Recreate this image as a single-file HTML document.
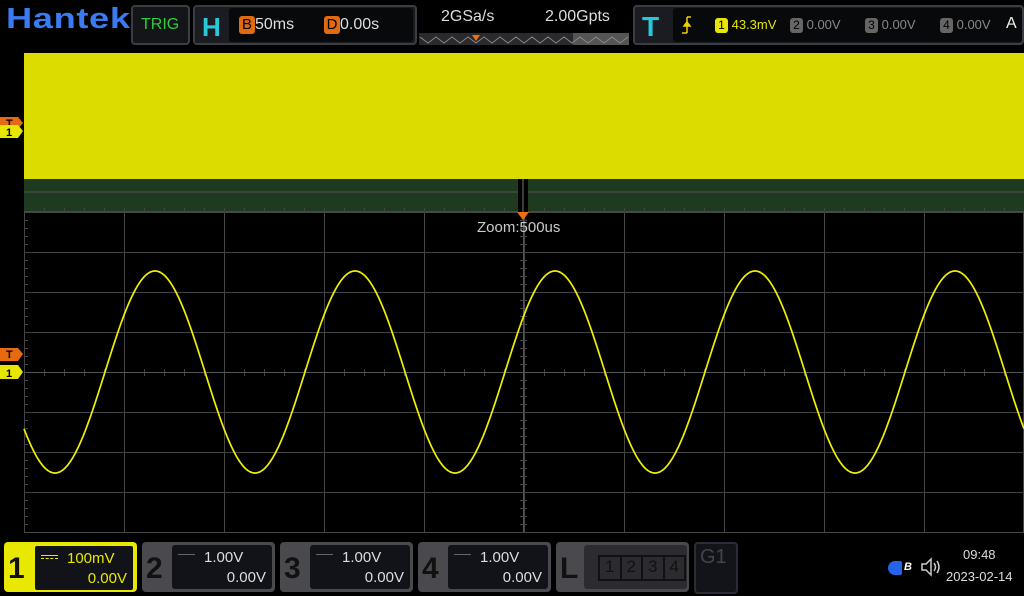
<!DOCTYPE html>
<html><head><meta charset="utf-8"><style>
body{margin:0;width:1024px;height:596px;background:#000;overflow:hidden;font-family:"Liberation Sans",sans-serif;position:relative}
.a{position:absolute}
.box{position:absolute;border:2px solid #3a3d44;border-radius:4px;background:#1a1c22}
.badge{display:inline-block;border-radius:3px;text-align:center;font-size:12px;line-height:15px;width:13px;height:15px}
.ch{position:absolute;top:542px;height:50px;border-radius:4px;background:#4a4a4e}
.ch .n{position:absolute;left:4px;top:10px;font-size:30px;color:#111;font-weight:bold}
.ch .in{position:absolute;left:30px;top:3px;width:100px;height:44px;background:#121318;border-radius:3px;color:#ddd;font-size:15px}
</style></head><body>
<div class="a" style="left:6px;top:3px;font-size:29px;font-weight:bold;color:#3a7bf0;transform:scaleX(1.25);transform-origin:0 0;letter-spacing:0.5px">Hantek</div>
<div class="box" style="left:131px;top:5px;width:55px;height:36px;background:#141519"><div class="a" style="left:8px;top:9px;color:#2ecc40;font-size:16px">TRIG</div></div>
<div class="box" style="left:193px;top:5px;width:220px;height:36px"><div class="a" style="left:7px;top:5px;color:#29c8d8;font-size:26px;font-weight:bold">H</div>
<div class="a" style="left:34px;top:1px;width:184px;height:34px;background:#08090b;border-radius:3px;color:#ddd;font-size:16px">
<span class="a" style="left:10px;top:8px"><span class="badge" style="background:#e06a10;color:#000;width:16px;height:18px;font-size:15px;line-height:18px">B</span>50ms</span>
<span class="a" style="left:95px;top:8px"><span class="badge" style="background:#e06a10;color:#000;width:16px;height:18px;font-size:15px;line-height:18px">D</span>0.00s</span></div></div>
<div class="a" style="left:441px;top:8px;color:#ddd;font-size:16px">2GSa/s</div>
<div class="a" style="left:545px;top:8px;color:#ddd;font-size:16px">2.00Gpts</div>
<div class="a" style="left:419px;top:33px;width:210px;height:12px;background:#2a2a2e"></div>
<div class="a" style="left:573px;top:33px;width:56px;height:12px;background:#555"></div>
<svg class="a" style="left:420px;top:33px" width="210" height="12"><polyline fill="none" stroke="#888" stroke-width="1" points="0,4 8,10 16,4 24,10 32,4 40,10 48,4 56,10 64,4 72,10 80,4 88,10 96,4 104,10 112,4 120,10 128,4 136,10 144,4 152,10 160,4 168,10 176,4 184,10 192,4 200,10 208,4"/><polygon points="52,2 60,2 56,8" fill="#f07010"/></svg>
<div class="box" style="left:633px;top:5px;width:387px;height:36px"><div class="a" style="left:7px;top:4px;color:#29c8d8;font-size:28px;font-weight:bold">T</div>
<div class="a" style="left:38px;top:1px;width:349px;height:34px;background:#08090b;border-radius:3px;font-size:13px;color:#888">
<svg class="a" style="left:8px;top:8px" width="12" height="18"><path d="M6 1V17 M6 1H10 M1 17H6 M3 10L6 6L9 10Z" stroke="#f0d000" fill="#f0d000" stroke-width="1.5"/></svg>
<span class="a" style="left:42px;top:9px;color:#e6e600"><span class="badge" style="background:#e6e600;color:#000">1</span> 43.3mV</span>
<span class="a" style="left:117px;top:9px"><span class="badge" style="background:#666;color:#000">2</span> 0.00V</span>
<span class="a" style="left:192px;top:9px"><span class="badge" style="background:#666;color:#000">3</span> 0.00V</span>
<span class="a" style="left:267px;top:9px"><span class="badge" style="background:#666;color:#000">4</span> 0.00V</span>
<span class="a" style="left:333px;top:7px;color:#eee;font-size:16px">A</span></div></div>
<svg class="a" style="left:0;top:0" width="1024" height="596" id="s">
<rect x="24" y="53" width="1000" height="126" fill="#dcdc00"/>
<rect x="24" y="179" width="1000" height="33" fill="#1e3b22"/>
<line x1="24" y1="192" x2="1024" y2="192" stroke="#555"/>
<line x1="24" y1="212" x2="1024" y2="212" stroke="#666"/>
<g id="g" stroke="#444" stroke-width="1"></g>
<rect x="518" y="179" width="10" height="33" fill="#000"/>
<line x1="523" y1="179" x2="523" y2="212" stroke="#777"/>
<polygon points="517,212 529,212 523,220" fill="#f07010"/>
<path id="w" fill="none" stroke="#f0f000" stroke-width="1.7"/>
<g font-family="Liberation Sans" font-weight="bold" font-size="11">
<path d="M0 117H18L23 123L18 129H0Z" fill="#e86a10"/><text x="6" y="127" fill="#000">T</text>
<path d="M0 125H18L23 131L18 138H0Z" fill="#e6e600"/><text x="6" y="136" fill="#000">1</text>
<path d="M0 348H18L23 354L18 361H0Z" fill="#e86a10"/><text x="6" y="358" fill="#000">T</text>
<path d="M0 365H18L23 372L18 379H0Z" fill="#e6e600"/><text x="6" y="377" fill="#000">1</text>
</g>
</svg>
<div class="a" style="left:477px;top:219px;color:#ccc;font-size:15px">Zoom:500us</div>
<div class="ch" style="left:4px;background:#e8e800;width:133px"><div class="n">1</div><div class="in" style="color:#e8e800;border:1px solid #e8e800;width:98px"><span class="a" style="left:6px;top:9px;width:17px;border-top:1px solid #e8e800;border-bottom:1px dashed #e8e800;height:2px"></span><span class="a" style="left:32px;top:4px">100mV</span><span class="a" style="right:6px;top:24px">0.00V</span></div></div>
<div class="ch" style="left:142px;width:133px"><div class="n">2</div><div class="in"><span class="a" style="left:6px;top:9px;width:17px;border-top:1px solid #666;height:2px"></span><span class="a" style="left:32px;top:4px">1.00V</span><span class="a" style="right:6px;top:24px">0.00V</span></div></div>
<div class="ch" style="left:280px;width:133px"><div class="n">3</div><div class="in"><span class="a" style="left:6px;top:9px;width:17px;border-top:1px solid #666;height:2px"></span><span class="a" style="left:32px;top:4px">1.00V</span><span class="a" style="right:6px;top:24px">0.00V</span></div></div>
<div class="ch" style="left:418px;width:133px"><div class="n">4</div><div class="in"><span class="a" style="left:6px;top:9px;width:17px;border-top:1px solid #666;height:2px"></span><span class="a" style="left:32px;top:4px">1.00V</span><span class="a" style="right:6px;top:24px">0.00V</span></div></div>
<div class="ch" style="left:556px;width:133px"><div class="n">L</div><div class="in" style="left:28px;width:103px;background:#2c2c30"><div class="a" style="left:14px;top:10px;width:86px;height:24px;border:1px solid #111;color:#111;font-size:17px;display:flex"><span style="flex:1;border:1px solid #111;text-align:center">1</span><span style="flex:1;border:1px solid #111;text-align:center">2</span><span style="flex:1;border:1px solid #111;text-align:center">3</span><span style="flex:1;border:1px solid #111;text-align:center">4</span></div></div></div>
<div class="a" style="left:694px;top:542px;width:40px;height:48px;border:2px solid #2a2d36;border-radius:4px;background:#12141a;color:#444;font-size:20px"><span class="a" style="left:4px;top:2px">G1</span></div>
<div class="a" style="left:888px;top:561px;width:14px;height:14px;background:#2563eb;border-radius:7px 2px 2px 7px"></div>
<div class="a" style="left:904px;top:561px;color:#fff;font-size:11px;font-weight:bold;font-style:italic">B</div>
<svg class="a" style="left:920px;top:557px" width="22" height="20"><path d="M2 7H6L11 2V18L6 13H2Z M14 6Q17 10 14 14 M17 4Q21 10 17 16" fill="none" stroke="#ccc" stroke-width="1.5"/></svg>
<div class="a" style="left:963px;top:547px;color:#ddd;font-size:13px">09:48</div>
<div class="a" style="left:946px;top:569px;color:#ddd;font-size:13px">2023-02-14</div>
<script>
var g=document.getElementById('g'),h='';
for(var x=24;x<=1024;x+=100)h+='<line x1="'+(x==1024?1023.5:x+.5)+'" y1="212" x2="'+(x==1024?1023.5:x+.5)+'" y2="532"/>';
for(var y=212;y<=532;y+=40)h+='<line x1="24" y1="'+(y+.5)+'" x2="1024" y2="'+(y+.5)+'"/>';
for(var x=44;x<1024;x+=20){h+='<line x1="'+(x+.5)+'" y1="369" x2="'+(x+.5)+'" y2="376"/>';h+='<line x1="'+(x+.5)+'" y1="208" x2="'+(x+.5)+'" y2="212"/>';}
for(var y=220;y<532;y+=8){h+='<line x1="520" y1="'+(y+.5)+'" x2="527" y2="'+(y+.5)+'"/><line x1="24" y1="'+(y+.5)+'" x2="28" y2="'+(y+.5)+'"/>';}
h+='<line x1="523.5" y1="212" x2="523.5" y2="532" stroke="#555"/><line x1="24" y1="372.5" x2="1024" y2="372.5" stroke="#555"/>';
g.innerHTML=h;
var d='';for(var x=24;x<=1024;x+=1){var yy=372-101*Math.cos(2*Math.PI*(x-155)/200);d+=(x==24?'M':'L')+x+' '+yy.toFixed(1);}
document.getElementById('w').setAttribute('d',d);
</script>
</body></html>
